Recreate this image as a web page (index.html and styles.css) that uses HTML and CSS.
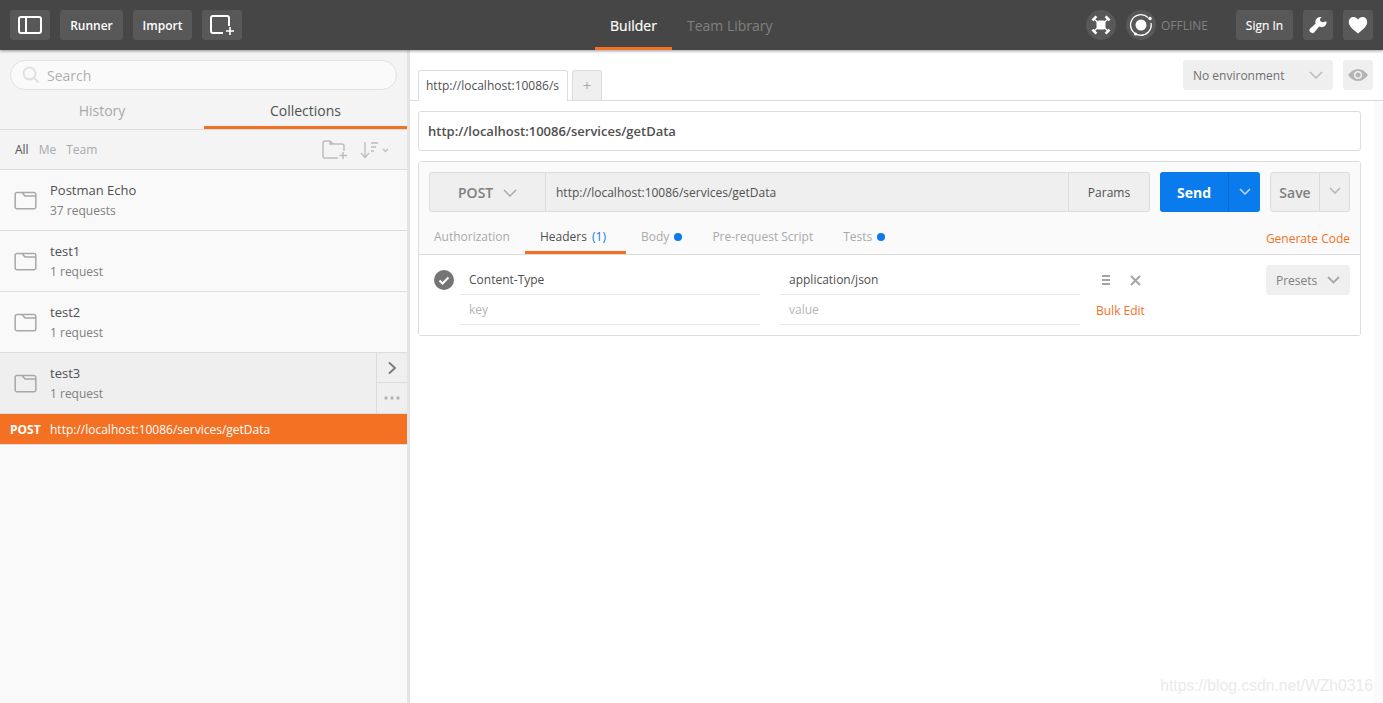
FILE: index.html
```html
<!DOCTYPE html>
<html lang="en">
<head>
<meta charset="utf-8">
<title>Postman</title>
<link rel="stylesheet" href="styles.css">
</head>
<body>
<header class="top">
  <div class="top-left">
    <button class="tb icon-btn"><svg width="26" height="20" viewBox="0 0 26 20"><rect x="2" y="2" width="22" height="16" rx="2" fill="none" stroke="#fff" stroke-width="2"/><path d="M9 2v16" stroke="#fff" stroke-width="2"/></svg></button>
    <button class="tb txt r">Runner</button>
    <button class="tb txt i">Import</button>
    <button class="tb icon-btn"><svg width="26" height="22" viewBox="0 0 26 22"><path d="M14 19H4a2 2 0 0 1-2-2V4a2 2 0 0 1 2-2h14a2 2 0 0 1 2 2v8" fill="none" stroke="#fff" stroke-width="2"/><path d="M21 13v8M17 17h8" stroke="#fff" stroke-width="1.6"/></svg></button>
  </div>
  <nav class="top-mid">
    <a class="mode on">Builder</a>
    <a class="mode">Team Library</a>
  </nav>
  <div class="top-right">
    <span class="circle"><svg width="24" height="24" viewBox="0 0 24 24"><rect x="7.500" y="7.500" width="9" height="9" rx="2" fill="#fff"/><path d="M5 6l14 12M19 6L5 18" stroke="#fff" stroke-width="1.4"/><path d="M2.500 6.500l4-4 1.800 1.800-4 4zM15.700 4.300l1.800-1.800 4 4-1.800 1.800zM2.500 17.500l1.800-1.800 4 4-1.800 1.800zM15.700 19.700l4-4 1.800 1.800-4 4z" fill="#fff"/></svg></span>
    <span class="circle c2"><svg width="26" height="26" viewBox="0 0 26 26"><path d="M20 5.500A10.300 10.300 0 1 0 23 11" fill="none" stroke="#fff" stroke-width="1.300"/><circle cx="13" cy="13" r="5.500" fill="#fff"/><circle cx="22" cy="6.500" r="1.700" fill="#fff"/><circle cx="7.500" cy="22" r="1.500" fill="#fff"/></svg></span>
    <span class="offline">OFFLINE</span>
    <button class="tb txt signin">Sign In</button>
    <button class="tb sq"><svg width="20" height="20" viewBox="0 0 20 20"><path d="M18.500 6.500c.4 3.300-2.300 6-5.500 5.600-.8-.1-1.300-.3-1.800-.6L6.500 17a2.800 2.800 0 0 1-4.300-3.600L7.700 8.600C7.400 8 7.200 7.300 7.300 6.500 7.600 3.600 10.400 1.500 13.800 2.100l-.6.500c-1.200.8-1.500 2-1 3.100.6 1.200 2.100 1.800 3.400 1.300.6-.2 1.400-.7 2.900-.5z" fill="#fff"/></svg></button>
    <button class="tb sq"><svg width="20" height="18" viewBox="0 0 20 18"><path d="M10 17.500C4 12.500.8 9.800.8 5.900.8 3 3 1 5.500 1 7.300 1 9 2 10 3.700 11 2 12.700 1 14.500 1 17 1 19.200 3 19.200 5.900c0 3.900-3.200 6.600-9.200 11.600z" fill="#fff"/></svg></button>
  </div>
</header>

<div class="app">
  <aside class="side">
    <div class="search-wrap">
      <div class="search">
        <svg width="18" height="18" viewBox="0 0 18 18"><circle cx="7.500" cy="7.500" r="6" fill="none" stroke="#e0e0e0" stroke-width="1.800"/><path d="M12 12l4.500 4.500" stroke="#e0e0e0" stroke-width="2"/></svg>
        <span>Search</span>
      </div>
    </div>
    <div class="side-tabs">
      <div class="side-tab">History</div>
      <div class="side-tab on">Collections</div>
    </div>
    <div class="filter">
      <span class="f on">All</span><span class="f">Me</span><span class="f">Team</span>
      <span class="filter-icons">
        <svg width="27" height="20" viewBox="0 0 27 20"><path d="M16 18H3a2 2 0 0 1-2-2V3a2 2 0 0 1 2-2h5l3 3h9a2 2 0 0 1 2 2v5M8 1v3h3" fill="none" stroke="#bdbdbd" stroke-width="1.500"/><path d="M21 12v7M17.500 15.500h7.500" stroke="#bdbdbd" stroke-width="1.500"/></svg>
        <svg class="sort" width="30" height="18" viewBox="0 0 30 18"><path d="M5 1v15M1 12l4 4.500L9 12" fill="none" stroke="#bdbdbd" stroke-width="1.300"/><path d="M11 2h7M11 6h5M11 10h3" stroke="#bdbdbd" stroke-width="1.400"/><path d="M23 8l2.500 2.500L28 8" fill="none" stroke="#bdbdbd" stroke-width="1.300"/></svg>
      </span>
    </div>
    <div class="coll"><svg class="folder" width="23" height="19" viewBox="0 0 23 19"><path d="M3 1.500h17a1.800 1.800 0 0 1 1.800 1.800V16a1.800 1.800 0 0 1-1.800 1.800H3A1.800 1.800 0 0 1 1.200 16V3.300A1.800 1.800 0 0 1 3 1.500zM8 1.500l3 3.500h10.800" fill="none" stroke="#a8a8a8" stroke-width="1.500"/></svg><div><div class="name">Postman Echo</div><div class="count">37 requests</div></div></div>
    <div class="coll"><svg class="folder" width="23" height="19" viewBox="0 0 23 19"><path d="M3 1.500h17a1.800 1.800 0 0 1 1.800 1.800V16a1.800 1.800 0 0 1-1.800 1.800H3A1.800 1.800 0 0 1 1.200 16V3.300A1.800 1.800 0 0 1 3 1.500zM8 1.500l3 3.500h10.800" fill="none" stroke="#a8a8a8" stroke-width="1.500"/></svg><div><div class="name">test1</div><div class="count">1 request</div></div></div>
    <div class="coll"><svg class="folder" width="23" height="19" viewBox="0 0 23 19"><path d="M3 1.500h17a1.800 1.800 0 0 1 1.800 1.800V16a1.800 1.800 0 0 1-1.800 1.800H3A1.800 1.800 0 0 1 1.200 16V3.300A1.800 1.800 0 0 1 3 1.500zM8 1.500l3 3.500h10.800" fill="none" stroke="#a8a8a8" stroke-width="1.500"/></svg><div><div class="name">test2</div><div class="count">1 request</div></div></div>
    <div class="coll open"><svg class="folder" width="23" height="19" viewBox="0 0 23 19"><path d="M3 1.500h17a1.800 1.800 0 0 1 1.800 1.800V16a1.800 1.800 0 0 1-1.800 1.800H3A1.800 1.800 0 0 1 1.200 16V3.300A1.800 1.800 0 0 1 3 1.500zM8 1.500l3 3.500h10.800" fill="none" stroke="#a8a8a8" stroke-width="1.500"/></svg><div class="grow"><div class="name">test3</div><div class="count">1 request</div></div>
      <div class="coll-actions">
        <div class="act first"><svg width="10" height="14" viewBox="0 0 10 14"><path d="M2 1.500L8 7l-6 5.500" fill="none" stroke="#777" stroke-width="1.800"/></svg></div>
        <div class="act"><svg width="16" height="4" viewBox="0 0 16 4"><circle cx="2" cy="2" r="1.700" fill="#b5b5b5"/><circle cx="8" cy="2" r="1.700" fill="#b5b5b5"/><circle cx="14" cy="2" r="1.700" fill="#b5b5b5"/></svg></div>
      </div>
    </div>
    <div class="req"><span class="m">POST</span><span>http://localhost:10086/services/getData</span></div>
  </aside>

  <main class="main">
    <div class="tabbar">
      <div class="rtab">http://localhost:10086/s</div>
      <div class="rtab-add">+</div>
      <div class="env">
        <div class="env-select"><span>No environment</span><svg width="14" height="8" viewBox="0 0 14 8"><path d="M1 1l6 6 6-6" fill="none" stroke="#bbb" stroke-width="1.500"/></svg></div>
        <div class="eye"><svg width="22" height="14" viewBox="0 0 22 14"><path d="M1 7c3-4 6.500-6 10-6s7 2 10 6c-3 4-6.500 6-10 6S4 11 1 7z" fill="#b5b5b5"/><circle cx="11" cy="7" r="4" fill="#efefef"/><circle cx="11" cy="7" r="2.500" fill="#b5b5b5"/></svg></div>
      </div>
    </div>
    <div class="content">
      <div class="name-box">http://localhost:10086/services/getData</div>
      <section class="builder">
        <div class="b-top">
          <div class="url-row">
            <div class="urlgroup">
              <div class="method"><span>POST</span><svg width="14" height="8" viewBox="0 0 14 8"><path d="M1 1l6 6 6-6" fill="none" stroke="#aaa" stroke-width="1.500"/></svg></div>
              <div class="url">http://localhost:10086/services/getData</div>
              <div class="params">Params</div>
            </div>
            <div class="send"><span class="send-l">Send</span><span class="send-r"><svg width="12" height="7" viewBox="0 0 12 7"><path d="M1 1l5 5 5-5" fill="none" stroke="#c5d5e5" stroke-width="1.500"/></svg></span></div>
            <div class="save"><span class="save-l">Save</span><span class="save-r"><svg width="12" height="7" viewBox="0 0 12 7"><path d="M1 1l5 5 5-5" fill="none" stroke="#b5b5b5" stroke-width="1.500"/></svg></span></div>
          </div>
          <div class="b-tabs">
            <span class="b-tab auth">Authorization</span>
            <span class="b-tab on">Headers <em>(1)</em></span>
            <span class="b-tab body">Body <i class="dot"></i></span>
            <span class="b-tab pre">Pre-request Script</span>
            <span class="b-tab">Tests <i class="dot"></i></span>
            <span class="gen">Generate Code</span>
          </div>
        </div>
        <div class="b-body">
          <div class="kv-grid">
            <span class="check"><svg width="20" height="20" viewBox="0 0 20 20"><circle cx="10" cy="10" r="10" fill="#757575"/><path d="M5.500 10.500l3 3 6-6" fill="none" stroke="#fff" stroke-width="2"/></svg></span>
            <div class="cell">Content-Type</div>
            <div class="cell">application/json</div>
            <div class="row-icons">
              <svg width="8" height="10" viewBox="0 0 8 10"><path d="M0 1h8M0 5h8M0 9h8" stroke="#a5a5a5" stroke-width="2"/></svg>
              <svg width="11" height="11" viewBox="0 0 11 11"><path d="M1 1l9 9M10 1l-9 9" stroke="#a5a5a5" stroke-width="2"/></svg>
            </div>
            <span></span>
            <div class="cell ph">key</div>
            <div class="cell ph">value</div>
            <div class="bulk">Bulk Edit</div>
          </div>
          <div class="presets"><span>Presets</span><svg width="13" height="8" viewBox="0 0 13 8"><path d="M1 1l5.500 5.500L12 1" fill="none" stroke="#a8a8a8" stroke-width="1.800"/></svg></div>
        </div>
      </section>
    </div>
    <div class="scroll"></div>
  </main>
</div>
<div class="mark">https://blog.csdn.net/WZh0316</div>
</body>
</html>
```

FILE: styles.css
```css
* { box-sizing: border-box; }
html, body { margin: 0; height: 100%; overflow: hidden; }
body { width: 1383px; height: 703px; background: #fff; font-family: "Open Sans", sans-serif; color: #505050; position: relative; }
button { font-family: inherit; border: 0; padding: 0; }

.top { height: 50px; background: #464646; display: grid; grid-template-columns: 595px 1fr auto; align-items: center; padding-left: 10px; padding-right: 10px; box-shadow: 0 1px 3px rgba(0,0,0,.4); position: relative; z-index: 2; }
.top-left { display: flex; gap: 10px; }
.tb { height: 30px; background: #585858; border-radius: 3px; color: #fff; display: flex; align-items: center; justify-content: center; }
.icon-btn { width: 40px; }
.txt { font-size: 12px; font-weight: 600; }
.r { width: 63px; }
.i { width: 59px; }
.top-mid { display: flex; height: 50px; margin-left: -10px; }
.mode { font-size: 14px; color: #808080; line-height: 51px; margin-left: 15px; }
.mode.on { color: #fff; width: 77px; margin-left: 0; text-align: center; border-bottom: 3px solid #f47023; height: 50px; font-weight: 400; -webkit-text-stroke: .2px #fff; }
.top-right { display: flex; align-items: center; }
.circle { width: 30px; height: 30px; border-radius: 50%; background: #585858; display: flex; align-items: center; justify-content: center; }
.c2 { margin-left: 10px; }
.offline { font-size: 12px; color: #808080; margin-left: 5px; width: 75px; }
.signin { width: 57px; font-weight: 400; -webkit-text-stroke: .15px #fff; }
.sq { width: 30px; margin-left: 10px; }

.app { display: flex; height: 653px; }
.side { width: 410px; flex: none; background: #f9f9f9; border-right: 3px solid #e4e4e4; font-size: 12px; }
.search-wrap { padding: 10px 10px 5px; background: #f4f4f4; }
.search { height: 30px; border: 1px solid #e2e2e2; border-radius: 15px; background: #fafafa; display: flex; align-items: center; gap: 7px; padding-left: 11px; font-size: 14px; color: #b0b0b0; }
.side-tabs { display: flex; height: 35px; background: #f4f4f4; border-bottom: 1px solid #dcdcdc; }
.side-tab { width: 204px; text-align: center; font-size: 14px; color: #aaa; line-height: 32px; }
.side-tab.on { width: 203px; color: #505050; border-bottom: 3px solid #f47023; height: 34px; }
.filter { height: 40px; background: #f4f4f4; border-bottom: 1px solid #dcdcdc; display: flex; align-items: center; padding-left: 15px; color: #aaa; gap: 10px; font-size: 12px; }
.filter-icons { margin-left: auto; display: flex; align-items: center; gap: 11px; padding-right: 17px; }
.f.on { color: #505050; }
.coll { height: 61px; border-bottom: 1px solid #dcdcdc; display: flex; align-items: center; padding-left: 14px; gap: 13px; background: #f9f9f9; }
.coll.open { background: #efefef; }
.folder { flex: none; margin-top: 1px; }
.name { font-size: 13px; color: #505050; line-height: 18px; }
.count { font-size: 12px; color: #808080; line-height: 17px; margin-top: 3px; }
.grow { flex: 1; }
.coll-actions { width: 31px; height: 60px; border-left: 1px solid #dcdcdc; display: flex; flex-direction: column; }
.act { flex: 1; display: flex; align-items: center; justify-content: center; }
.act.first { flex: none; height: 29px; }
.act + .act { border-top: 1px solid #dcdcdc; }
.req { height: 31px; background: #f47023; color: #fff; display: flex; align-items: center; font-size: 12px; border-bottom: 1px solid #e0e0e0; padding-left: 10px; }
.m { font-weight: 700; width: 40px; flex: none; font-size: 12px; }

.main { flex: 1; display: flex; flex-wrap: wrap; align-content: flex-start; position: relative; min-width: 0; }
.tabbar { width: 100%; height: 51px; border-bottom: 1px solid #dcdcdc; display: flex; align-items: flex-end; padding-left: 8px; position: relative; }
.rtab { width: 150px; height: 31px; margin-bottom: -1px; background: #fff; border: 1px solid #dcdcdc; border-bottom: 0; border-radius: 3px 3px 0 0; font-size: 12px; line-height: 30px; padding-left: 7px; padding-right: 8px; overflow: hidden; white-space: nowrap; }
.rtab-add { width: 30px; height: 30px; margin-left: 4px; background: #efefef; border: 1px solid #dcdcdc; border-bottom: 0; border-radius: 3px 3px 0 0; text-align: center; color: #aaa; font-size: 15px; line-height: 28px; }
.env { margin-left: auto; margin-right: 10px; align-self: flex-start; margin-top: 10px; display: flex; gap: 10px; }
.env-select { width: 150px; height: 30px; background: #efefef; border-radius: 3px; display: flex; align-items: center; justify-content: space-between; padding: 0 10px 0 10px; font-size: 12px; color: #707070; }
.eye { width: 30px; height: 30px; background: #efefef; border-radius: 3px; display: flex; align-items: center; justify-content: center; }

.content { width: 951px; padding: 10px 0 0 8px; }
.name-box { height: 40px; border: 1px solid #dcdcdc; border-radius: 3px; font-size: 13px; font-weight: 600; line-height: 38px; padding-left: 9px; color: #505050; }
.builder { margin-top: 10px; border: 1px solid #dcdcdc; border-radius: 3px; }
.b-top { background: #fafafa; border-bottom: 1px solid #dcdcdc; padding: 10px 10px 0; height: 93px; }
.url-row { display: flex; height: 40px; }
.urlgroup { width: 721px; display: flex; background: #efefef; border: 1px solid #dcdcdc; border-radius: 3px; }
.method { width: 116px; border-right: 1px solid #dcdcdc; display: flex; align-items: center; gap: 10px; padding-left: 28px; padding-top: 1px; font-size: 14px; font-weight: 600; color: #808080; }
.url { flex: 1; font-size: 12px; line-height: 40px; padding-left: 10px; }
.params { width: 81px; border-left: 1px solid #dcdcdc; text-align: center; font-size: 12px; line-height: 40px; }
.send { width: 100px; margin-left: 10px; background: #097bed; border-radius: 3px; display: flex; color: #fff; font-size: 14px; font-weight: 700; line-height: 42px; }
.send-l { width: 69px; text-align: center; border-right: 1px solid #0a6bcb; }
.send-r { flex: 1; display: flex; align-items: center; justify-content: center; padding-bottom: 2px; }
.save { width: 80px; margin-left: 10px; background: #efefef; border: 1px solid #dcdcdc; border-radius: 3px; display: flex; color: #808080; font-size: 14px; font-weight: 600; line-height: 40px; }
.save-l { width: 49px; text-align: center; border-right: 1px solid #dcdcdc; }
.save-r { flex: 1; display: flex; align-items: center; justify-content: center; padding-bottom: 4px; }
.b-tabs { display: flex; height: 32px; margin-top: 10px; font-size: 12px; color: #aaa; }
.b-tab { padding: 0 5px; line-height: 30px; margin-right: 15px; white-space: nowrap; height: 32px; }
.b-tab.auth { margin-right: 10px; }
.b-tab.on { color: #505050; width: 101px; padding: 0 15px; margin-right: 10px; border-bottom: 3px solid #f47023; }
.b-tab.body { margin-right: 20px; }
.b-tab.pre { margin-right: 20px; }
.b-tab em { font-style: normal; color: #097bed; margin-left: 2px; }
.dot { display: inline-block; width: 8px; height: 8px; border-radius: 50%; background: #097bed; margin-left: 2px; }
.gen { margin-left: auto; color: #f47023; line-height: 34px; }
.b-body { height: 80px; display: flex; padding: 10px 10px 0 15px; background: #fff; justify-content: space-between; }
.kv-grid { display: grid; grid-template-columns: 26px 300px 300px 150px; grid-auto-rows: 30px; font-size: 12px; }
.check { display: flex; align-items: center; height: 30px; }
.cell { border-bottom: 1px solid #e8e8e8; line-height: 29px; padding-left: 9px; }
.cell + .cell { margin-left: 20px; margin-right: -20px; }
.cell.ph { color: #b5b5b5; }
.row-icons { display: flex; align-items: center; gap: 20px; padding-left: 42px; }
.bulk { color: #f47023; padding-left: 36px; line-height: 32px; }
.presets { width: 84px; height: 30px; background: #efefef; border-radius: 3px; display: flex; align-items: center; justify-content: space-between; padding: 0 10px; font-size: 12px; color: #808080; }
.scroll { position: absolute; right: 0; top: 51px; bottom: 0; width: 9px; background: #fafafa; }
.mark { position: absolute; right: 10px; bottom: 8px; font: 15.700px "Liberation Sans", sans-serif; color: #eaeaea; }
```
